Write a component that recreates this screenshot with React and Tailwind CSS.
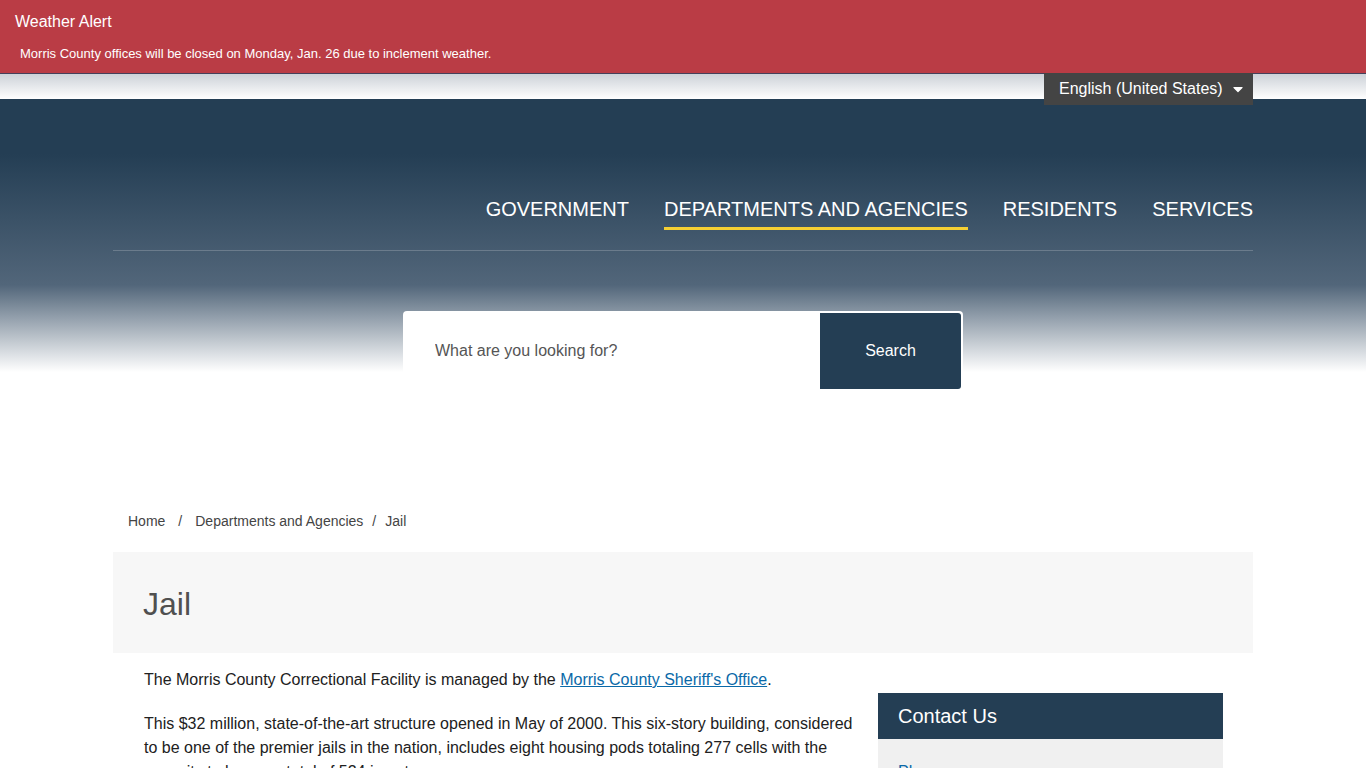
import { useState } from 'react';
import { FaCaretDown } from 'react-icons/fa';

const navItems = [
	{ label: 'GOVERNMENT', href: '#government' },
	{ label: 'DEPARTMENTS AND AGENCIES', href: '#departments', active: true },
	{ label: 'RESIDENTS', href: '#residents' },
	{ label: 'SERVICES', href: '#services' },
];

function WeatherAlert() {
	return (
		<section className="border-b border-[#45405a] bg-[#ba3c45] px-[15px] pt-[10px] pb-[8px] text-white">
			<h2 className="text-base leading-6">Weather Alert</h2>
			<p className="px-[5px] pt-[10px] pb-px text-[13px] leading-5">
				Morris County offices will be closed on Monday, Jan. 26 due to inclement
				weather.
			</p>
		</section>
	);
}

function LanguagePicker() {
	const [language, setLanguage] = useState('en');

	return (
		<div className="relative z-10 -mt-px h-8 bg-[#444]">
			<select
				aria-label="Language"
				value={language}
				onChange={(e) => setLanguage(e.target.value)}
				className="h-8 w-[209px] appearance-none bg-transparent pr-6 pl-[15px] text-base text-white">
				<option value="en">English (United States)</option>
			</select>
			<FaCaretDown className="pointer-events-none absolute top-2 right-[7px] size-4 text-white" />
		</div>
	);
}

function Header() {
	return (
		<header>
			<div className="h-[25px] bg-linear-to-b from-[#cdd2d8] to-white">
				<div className="mx-auto flex max-w-[1140px] justify-end">
					<LanguagePicker />
				</div>
			</div>
			<div className="bg-[linear-gradient(to_bottom,#243e54_0,#243e54_55px,#52667a_186px,#fff_273px)]">
				<div className="mx-auto max-w-[1140px]">
					<nav className="flex justify-end gap-[35px] border-b border-white/20 pt-24 pb-5 text-xl text-white">
						{navItems.map((item) => (
							<a
								key={item.label}
								href={item.href}
								className={
									item.active
										? 'border-b-3 border-[#f5cf33] pb-1 leading-7'
										: 'border-b-3 border-transparent pb-1 leading-7'
								}>
								{item.label}
							</a>
						))}
					</nav>
				</div>
				<form
					className="mx-auto mt-[60px] flex h-20 max-w-[560px] rounded bg-white p-0.5"
					onSubmit={(e) => e.preventDefault()}>
					<input
						type="text"
						aria-label="Search the site"
						placeholder="What are you looking for?"
						className="min-w-0 flex-1 px-[30px] text-base text-[#444] outline-none placeholder:text-[#555]"
					/>
					<button
						type="submit"
						className="w-[141px] rounded-r-[3px] bg-[#243e54] text-base text-white">
						Search
					</button>
				</form>
			</div>
		</header>
	);
}

function Breadcrumbs() {
	return (
		<nav
			aria-label="Breadcrumb"
			className="flex px-[15px] pt-[120px] pb-[21px] text-sm leading-5 text-[#444]">
			<a href="#home">Home</a>
			<span className="px-[13px]">/</span>
			<a href="#departments">Departments and Agencies</a>
			<span className="px-[9px]">/</span>
			<span>Jail</span>
		</nav>
	);
}

function ContactCard() {
	return (
		<aside className="mt-[25px] w-[345px] shrink-0 bg-[#f0f0f0]">
			<h2 className="bg-[#243e54] px-5 py-[9px] text-xl leading-7 text-white">
				Contact Us
			</h2>
			<p className="px-5 py-[21px] text-base leading-6 text-[#0a69a8]">Phone</p>
		</aside>
	);
}

export default function App() {
	return (
		<div className="min-h-screen bg-white font-['Liberation_Sans',Arial,sans-serif]">
			<WeatherAlert />
			<Header />
			<main className="mx-auto max-w-[1140px]">
				<Breadcrumbs />
				<h1 className="bg-[#f7f7f7] px-[30px] pt-8 pb-7 text-[32px] leading-[41px] text-[#505050]">
					Jail
				</h1>
				<div className="flex gap-[22px] px-[30px] pt-[15px]">
					<article className="flex-1 space-y-5 pl-px text-base leading-6 text-[#212121]">
						<p>
							The Morris County Correctional Facility is managed by the{' '}
							<a href="#sheriff" className="text-[#0a69a8] underline">
								Morris County Sheriff&apos;s Office
							</a>
							.
						</p>
						<p>
							This $32 million, state-of-the-art structure opened in May of 2000.
							This six-story building, considered to be one of the premier jails
							in the nation, includes eight housing pods totaling 277 cells with
							the capacity to house a total of 524 inmates.
						</p>
					</article>
					<ContactCard />
				</div>
			</main>
		</div>
	);
}
